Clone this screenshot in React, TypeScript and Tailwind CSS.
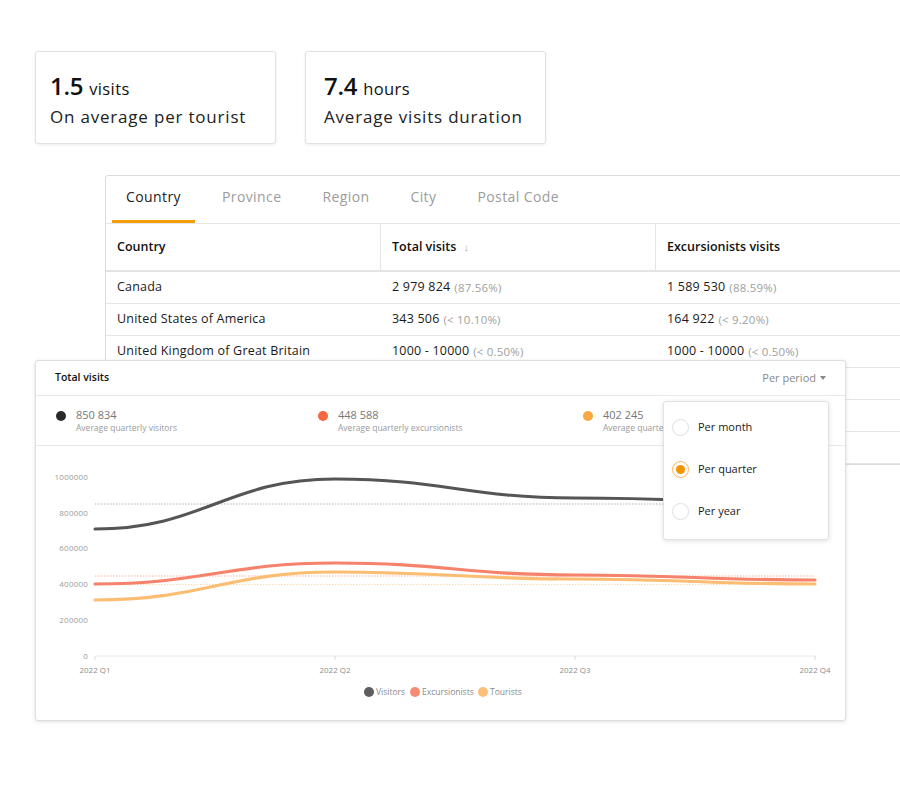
import React from "react";

type Pt = [number, number];

function smoothPath(pts: Pt[]): string {
  let d = `M${pts[0][0]},${pts[0][1]}`;
  for (let i = 1; i < pts.length; i++) {
    const [x0, y0] = pts[i - 1];
    const [x1, y1] = pts[i];
    const h = (x1 - x0) * 0.45;
    d += ` C${x0 + h},${y0} ${x1 - h},${y1} ${x1},${y1}`;
  }
  return d;
}

const XS = [95, 335, 575, 815];
const visitors: Pt[] = [[95, 529], [335, 479], [575, 498], [815, 503]];
const excursionists: Pt[] = [[95, 584], [335, 563], [575, 575], [815, 580]];
const tourists: Pt[] = [[95, 600], [335, 572], [575, 579], [815, 584]];

const font = { fontFamily: '"Open Sans", "Noto Sans", Arial, sans-serif' };

function StatCard({ value, unit, label, className }: { value: string; unit: string; label: string; className: string }) {
  return (
    <div className={`h-[93px] bg-white border border-[#e2e2e2] rounded-[3px] shadow-[0_1px_3px_rgba(0,0,0,0.08)] pt-[22px] ${className}`}>
      <div className="flex items-baseline gap-[6px] leading-none text-[#111]">
        <span className="text-[24px] font-semibold tracking-[-0.3px]">{value}</span>
        <span className="text-[16.5px] tracking-[0.4px]">{unit}</span>
      </div>
      <div className="mt-[10px] text-[17px] leading-none text-[#222] tracking-[0.8px]">{label}</div>
    </div>
  );
}

const tabs = ["Country", "Province", "Region", "City", "Postal Code"];

const rows = [
  ["Canada", "2 979 824", "(87.56%)", "1 589 530", "(88.59%)"],
  ["United States of America", "343 506", "(< 10.10%)", "164 922", "(< 9.20%)"],
  ["United Kingdom of Great Britain", "1000 - 10000", "(< 0.50%)", "1000 - 10000", "(< 0.50%)"],
];

function TableCard() {
  return (
    <div className="absolute left-[105px] top-[175px] w-[830px] h-[290px] bg-white border border-[#dcdcdc] rounded-tl-[3px] overflow-hidden">
      <div className="h-[48px] flex gap-[13px] pl-[6px] border-b border-[#e6e6e6]">
        {tabs.map((t, i) => (
          <div
            key={t}
            className={`px-[14px] pt-[11px] text-[14px] leading-[20px] tracking-[0.4px] ${i === 0 ? "text-[#222] border-b-[3px] border-[#f59e0b]" : "text-[#9c9c9c]"}`}
          >
            {t}
          </div>
        ))}
      </div>
      <div className="grid grid-cols-[275px_275px_280px] h-[48px] border-b-2 border-[#e3e3e3] text-[12.5px] font-semibold text-[#111]">
        <div className="flex items-center pl-[11px] border-r border-[#e3e3e3]">Country</div>
        <div className="flex items-center pl-[11px] border-r border-[#e3e3e3]">
          Total visits <span className="ml-[7px] font-normal text-[#aaa] text-[11px]">↓</span>
        </div>
        <div className="flex items-center pl-[11px]">Excursionists visits</div>
      </div>
      {rows.map((r) => (
        <div key={r[0]} className="grid grid-cols-[275px_275px_280px] h-[32px] border-b border-[#e6e6e6] text-[12.5px] text-[#1a1a1a] tracking-[0.2px]">
          <div className="flex items-center pl-[11px]">{r[0]}</div>
          <div className="flex items-center pl-[11px]">
            {r[1]}
            <span className="ml-[4px] text-[11.5px] text-[#a0a0a0]">{r[2]}</span>
          </div>
          <div className="flex items-center pl-[11px]">
            {r[3]}
            <span className="ml-[4px] text-[11.5px] text-[#a0a0a0]">{r[4]}</span>
          </div>
        </div>
      ))}
      {[0, 1, 2].map((i) => (
        <div key={i} className="h-[32px] border-b border-[#e6e6e6]" />
      ))}
    </div>
  );
}

function Stat({ color, value, label, w }: { color: string; value: string; label: string; w: string }) {
  return (
    <div className={`flex items-start gap-[10px] ${w}`}>
      <span className="mt-[3px] w-[10px] h-[10px] rounded-full" style={{ background: color }} />
      <div className="flex flex-col">
        <span className="text-[11px] leading-[14px] text-[#777]">{value}</span>
        <span className="text-[8.5px] leading-[12px] text-[#9a9a9a]">{label}</span>
      </div>
    </div>
  );
}

function Radio({ checked, label }: { checked?: boolean; label: string }) {
  return (
    <div className="flex items-center gap-[9px] h-[42px]">
      <span
        className={`w-[17px] h-[17px] rounded-full flex items-center justify-center border ${checked ? "border-[#f9b25a] border-[1.5px]" : "border-[#dedede]"}`}
      >
        {checked && <span className="w-[9px] h-[9px] rounded-full bg-[#f59300]" />}
      </span>
      <span className="text-[11px] text-[#1a1a1a]">{label}</span>
    </div>
  );
}

function ChartCard() {
  const yLabels: [string, number][] = [
    ["1000000", 477],
    ["800000", 513],
    ["600000", 548],
    ["400000", 584],
    ["200000", 620],
    ["0", 656],
  ];
  const xLabels = ["2022 Q1", "2022 Q2", "2022 Q3", "2022 Q4"];
  return (
    <div className="absolute left-[35px] top-[360px] w-[811px] h-[361px] bg-white border border-[#dedede] rounded-[3px] shadow-[0_1px_4px_rgba(0,0,0,0.12)] flex flex-col">
      <div className="h-[35px] shrink-0 flex items-center justify-between px-[19px] border-b border-[#e8e8e8]">
        <span className="text-[10.5px] font-semibold text-[#111]">Total visits</span>
        <span className="text-[11px] text-[#8a8a8a] flex items-center">
          Per period
          <span className="ml-[4px] w-0 h-0 border-l-[3.5px] border-r-[3.5px] border-t-[4px] border-l-transparent border-r-transparent border-t-[#888]" />
        </span>
      </div>
      <div className="h-[50px] shrink-0 flex items-center pl-[20px] border-b border-[#e8e8e8]">
        <Stat w="w-[262px]" color="#2b2b2b" value="850 834" label="Average quarterly visitors" />
        <Stat w="w-[265px]" color="#f4673f" value="448 588" label="Average quarterly excursionists" />
        <Stat w="w-[200px]" color="#f9a842" value="402 245" label="Average quarterly tourists" />
      </div>
      <svg className="block" width="809" height="274" viewBox="36 446 809 274">
        <line x1="95" y1="656" x2="815" y2="656" stroke="#e6e6e6" strokeWidth="1" />
        {XS.map((x) => (
          <line key={x} x1={x} y1="656" x2={x} y2="660" stroke="#dcdcdc" strokeWidth="1" />
        ))}
        {yLabels.map(([t, y]) => (
          <text key={t} x="88" y={y + 3} textAnchor="end" fontSize="8" fill="#9a9a9a" style={font} letterSpacing="0.2">
            {t}
          </text>
        ))}
        {xLabels.map((t, i) => (
          <text key={t} x={XS[i]} y="673" textAnchor="middle" fontSize="8" fill="#8c8c8c" style={font}>
            {t}
          </text>
        ))}
        <line x1="95" y1="504" x2="815" y2="504" stroke="#9a9a9a" strokeWidth="0.8" strokeDasharray="1.5 1.5" />
        <line x1="95" y1="576" x2="815" y2="576" stroke="#f7a08c" strokeWidth="0.8" strokeDasharray="1.5 1.5" />
        <line x1="95" y1="584.5" x2="815" y2="584.5" stroke="#fcd19a" strokeWidth="0.8" strokeDasharray="1.5 1.5" />
        <path d={smoothPath(tourists)} fill="none" stroke="#fbbd72" strokeWidth="3.2" strokeLinecap="round" />
        <path d={smoothPath(excursionists)} fill="none" stroke="#f5826a" strokeWidth="3.2" strokeLinecap="round" />
        <path d={smoothPath(visitors)} fill="none" stroke="#555555" strokeWidth="3" strokeLinecap="round" />
        <circle cx="369" cy="692" r="5" fill="#5e5e5e" />
        <text x="376" y="695" fontSize="8.5" fill="#8a8a8a" style={font}>Visitors</text>
        <circle cx="415" cy="692" r="5" fill="#f68b73" />
        <text x="422" y="695" fontSize="8.5" fill="#8a8a8a" style={font}>Excursionists</text>
        <circle cx="483" cy="692" r="5" fill="#fcc07c" />
        <text x="490" y="695" fontSize="8.5" fill="#8a8a8a" style={font}>Tourists</text>
      </svg>
      <div className="absolute left-[627px] top-[40px] w-[166px] h-[139px] bg-white border border-[#e2e2e2] rounded-[3px] shadow-[0_1px_5px_rgba(0,0,0,0.12)] pl-[8px] pt-[4px]">
        <Radio label="Per month" />
        <Radio checked label="Per quarter" />
        <Radio label="Per year" />
      </div>
    </div>
  );
}

export default function App() {
  return (
    <div className="relative w-[900px] h-[785px] bg-white overflow-hidden" style={font}>
      <div className="flex pt-[51px] pl-[35px] gap-[29px]">
        <StatCard className="w-[241px] pl-[14px]" value="1.5" unit="visits" label="On average per tourist" />
        <StatCard className="w-[241px] pl-[18px]" value="7.4" unit="hours" label="Average visits duration" />
      </div>
      <TableCard />
      <ChartCard />
    </div>
  );
}
